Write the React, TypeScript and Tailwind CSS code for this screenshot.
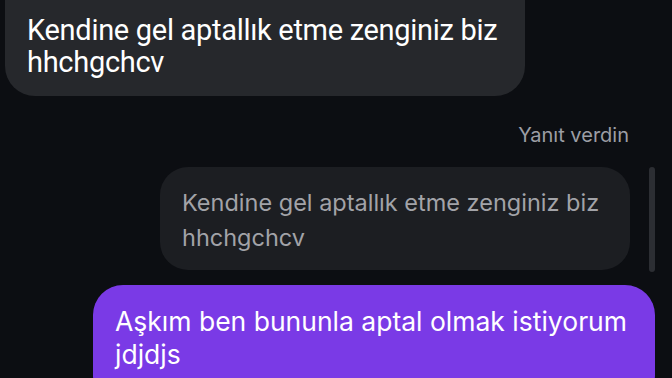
import React from "react";

const App: React.FC = () => {
  return (
    <div className="w-[672px] h-[378px] overflow-hidden bg-[#0c0e12] flex flex-col">
      {/* incoming message, cut off at the top */}
      <div className="ml-[5px] -mt-[30px] w-[520px] h-[126px] shrink-0 rounded-[30px] bg-[#26282c] pl-[22px] pt-[44px] font-['Roboto',sans-serif] text-[29px] leading-[32px] tracking-[-0.3px] text-white">
        Kendine gel aptallık etme zenginiz biz
        <br />
        hhchgchcv
      </div>

      <div className="mt-[27px] pr-[43px] text-right font-['Inter',sans-serif] text-[20px] leading-[24px] text-[#9c9ea5]">
        Yanıt verdin
      </div>

      {/* replied-to preview */}
      <div className="mt-[20px] flex items-start pl-[160px]">
        <div className="w-[470px] h-[103px] rounded-[28px] bg-[#1c1e22] pl-[22px] pt-[18px] font-['Inter',sans-serif] text-[23.5px] leading-[35px] text-[#a2a3a8]">
          Kendine gel aptallık etme zenginiz biz
          <br />
          hhchgchcv
        </div>
        <div className="ml-[19px] w-[6px] h-[105px] rounded-full bg-[#2c2e33]" />
      </div>

      {/* own message */}
      <div className="mt-[13px] ml-[93px] w-[562px] h-[120px] shrink-0 rounded-[30px] bg-[#7a3ae6] pl-[22px] pt-[20px] font-['Inter',sans-serif] text-[26.5px] leading-[33px] text-white">
        Aşkım ben bununla aptal olmak istiyorum
        <br />
        jdjdjs
      </div>
    </div>
  );
};

export default App;
